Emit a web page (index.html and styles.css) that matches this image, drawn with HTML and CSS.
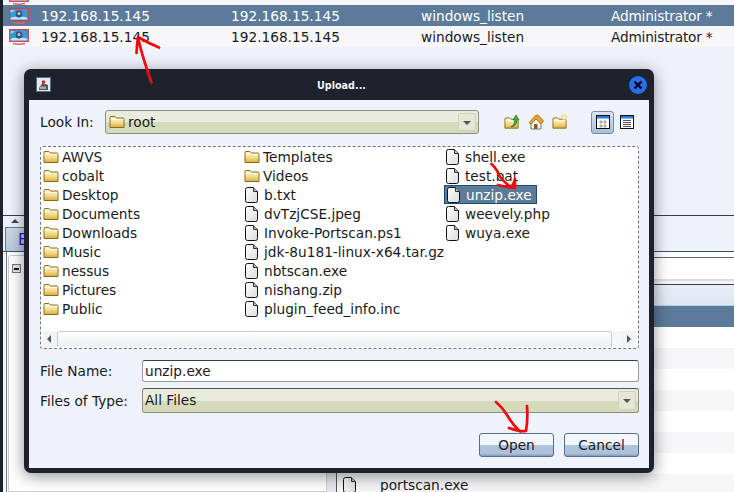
FILE: index.html
```html
<!DOCTYPE html>
<html>
<head>
    <meta charset="utf-8" />
    <title>Upload...</title>
    <link rel="stylesheet" href="styles.css">
</head>
<body>
<svg class="defs" width="0" height="0">
    <defs>
        <linearGradient id="gold" x1="0" y1="0" x2="0" y2="1">
            <stop offset="0" stop-color="#fdf6d0" />
            <stop offset="0.55" stop-color="#f3dc8e" />
            <stop offset="1" stop-color="#d9ac3e" />
        </linearGradient>
        <linearGradient id="sheet" x1="0" y1="0" x2="1" y2="1">
            <stop offset="0" stop-color="#ffffff" />
            <stop offset="1" stop-color="#dcdcdc" />
        </linearGradient>
        <symbol id="folder" viewBox="0 0 16 14">
            <path d="M1 2.5 Q1 1.5 2 1.5 H6 L7.5 3 H14 Q15 3 15 4 V12.5 H1 Z" fill="url(#gold)" stroke="#8a6d1c" />
            <path d="M1.5 4.5 H14.5" stroke="#fffbe6" />
        </symbol>
        <symbol id="doc" viewBox="0 0 13 16">
            <path d="M2.5 .5 H8.5 L12.5 4.5 V13.5 Q12.5 15.5 10.5 15.5 H2.5 Q.5 15.5 .5 13.5 V2.5 Q.5 .5 2.5 .5 Z" fill="url(#sheet)" stroke="#111" />
            <path d="M8.5 .5 V4.5 H12.5" fill="#bbb" stroke="#333" />
        </symbol>
        <symbol id="host" viewBox="0 0 20 16">
            <rect x=".7" y=".7" width="18.6" height="11.6" fill="#2f9bdc" stroke="#d93c4a" stroke-width="1.3" />
            <path d="M1.4 10 Q6 8 10 9.5 Q14 8 18.6 10 V11.6 H1.4 Z" fill="#bfe6f8" />
            <path d="M1.4 2 H6 Q4 4.5 1.4 4.5 Z" fill="#8fd0f0" />
            <circle cx="10" cy="6" r="3.4" fill="#2f4f96" />
            <circle cx="10" cy="5.6" r="1.5" fill="#e9cf55" />
            <path d="M4 14.4 Q10 16 16 14.4" fill="none" stroke="#e2606c" stroke-width="1.6" />
        </symbol>
    </defs>
</svg>

<div class="app">
    <div class="hosts">
        <div class="host-row stub"><svg class="host-icon"><use href="#host" /></svg></div>
        <div class="host-row selected">
            <svg class="host-icon"><use href="#host" /></svg>
            <span>192.168.15.145</span><span>192.168.15.145</span><span>windows_listen</span><span>Administrator *</span>
        </div>
        <div class="host-row">
            <svg class="host-icon"><use href="#host" /></svg>
            <span>192.168.15.145</span><span>192.168.15.145</span><span>windows_listen</span><span>Administrator *</span>
        </div>
    </div>
    <div class="gap"></div>
    <div class="tabstrip">
        <div class="tab-arrow"></div>
        <div class="tab-row"><div class="tab">E</div></div>
    </div>
    <div class="tabpanel">
        <div class="tree"><span class="minus"></span></div>
        <div class="splitter"></div>
        <div class="files">
            <div class="pathbar"></div>
            <div class="thead"></div>
            <div class="file-row selected"></div>
            <div class="file-row"></div>
            <div class="file-row alt"></div>
            <div class="file-row"></div>
            <div class="file-row alt"></div>
            <div class="file-row"></div>
            <div class="file-row alt"></div>
            <div class="file-row"></div>
            <div class="file-row alt">
                <svg class="doc"><use href="#doc" /></svg>
                <span>portscan.exe</span>
            </div>
        </div>
    </div>
</div>

<div class="dialog">
    <div class="titlebar">
        <svg class="app-icon" viewBox="0 0 15 15">
            <rect x=".5" y=".5" width="14" height="14" fill="#e4eaf0" stroke="#50708c" />
            <path d="M3 11 L6.5 6 L12 8 V13 H3 Z" fill="#555" />
            <path d="M3.5 9.5 H10 V12 H3.5 Z" fill="#aaa" />
            <circle cx="7.5" cy="5" r="1.8" fill="#e0202a" />
        </svg>
        <div class="title">Upload...</div>
        <div class="close">
            <svg viewBox="0 0 10 10" width="10" height="10"><path d="M1.5 1.5 L8.5 8.5 M8.5 1.5 L1.5 8.5" stroke="#0a0a14" stroke-width="2.4" /></svg>
        </div>
    </div>
    <div class="dialog-body">
        <div class="lookin">
            <label class="field-label">Look In:</label>
            <div class="combo look-combo">
                <svg class="folder"><use href="#folder" /></svg>
                <span>root</span>
                <div class="combo-arrow"></div>
            </div>
            <div class="tools">
                <svg class="tool" viewBox="0 0 16 16">
                    <use href="#folder" width="15" height="14" y="2" />
                    <path d="M7 13 Q11 11 11 6 H9 L12 1 L15 6 H13 Q13 12 7 13 Z" fill="#3fae3a" stroke="#1c6e1c" stroke-width=".7" />
                </svg>
                <svg class="tool" viewBox="0 0 16 16">
                    <path d="M3 8 V15 H13 V8 L8 4 Z" fill="#f4f4f0" stroke="#777" />
                    <path d="M1 9 L7 2 Q9 0 11 2 L15.5 7 L13 10 L8 5 L3 10 Z" fill="#e8a42c" stroke="#9a6a10" stroke-width=".8" />
                    <rect x="6" y="10" width="3.5" height="5" fill="#8a5a20" />
                </svg>
                <svg class="tool" viewBox="0 0 16 16">
                    <use href="#folder" width="15" height="14" y="2" />
                    <circle cx="12" cy="3.5" r="2.4" fill="#fff6c0" stroke="#d8b040" stroke-width=".7" />
                </svg>
                <div class="view-toggle on">
                    <svg viewBox="0 0 14 14" width="14" height="14">
                        <rect x=".5" y=".5" width="13" height="13" fill="#fff" stroke="#111" />
                        <rect x="1" y="1" width="12" height="2.5" fill="#2a7de0" />
                        <path d="M4 6 h2 v2 h-2 z M8 6 h2 v2 h-2 z M4 10 h2 v2 h-2 z M8 10 h2 v2 h-2 z" fill="none" stroke="#777" stroke-width=".7" />
                    </svg>
                </div>
                <div class="view-toggle">
                    <svg viewBox="0 0 14 14" width="14" height="14">
                        <rect x=".5" y=".5" width="13" height="13" fill="#fff" stroke="#111" />
                        <rect x="1" y="1" width="12" height="2.5" fill="#2a7de0" />
                        <path d="M3 5.5 H11 M3 7.5 H11 M3 9.5 H11 M3 11.5 H11" stroke="#555" />
                    </svg>
                </div>
            </div>
        </div>

        <div class="filelist">
            <div class="columns">
                <ul class="column">
                    <li><svg class="folder"><use href="#folder" /></svg>AWVS</li>
                    <li><svg class="folder"><use href="#folder" /></svg>cobalt</li>
                    <li><svg class="folder"><use href="#folder" /></svg>Desktop</li>
                    <li><svg class="folder"><use href="#folder" /></svg>Documents</li>
                    <li><svg class="folder"><use href="#folder" /></svg>Downloads</li>
                    <li><svg class="folder"><use href="#folder" /></svg>Music</li>
                    <li><svg class="folder"><use href="#folder" /></svg>nessus</li>
                    <li><svg class="folder"><use href="#folder" /></svg>Pictures</li>
                    <li><svg class="folder"><use href="#folder" /></svg>Public</li>
                </ul>
                <ul class="column">
                    <li><svg class="folder"><use href="#folder" /></svg>Templates</li>
                    <li><svg class="folder"><use href="#folder" /></svg>Videos</li>
                    <li><svg class="doc"><use href="#doc" /></svg>b.txt</li>
                    <li><svg class="doc"><use href="#doc" /></svg>dvTzjCSE.jpeg</li>
                    <li><svg class="doc"><use href="#doc" /></svg>Invoke-Portscan.ps1</li>
                    <li><svg class="doc"><use href="#doc" /></svg>jdk-8u181-linux-x64.tar.gz</li>
                    <li><svg class="doc"><use href="#doc" /></svg>nbtscan.exe</li>
                    <li><svg class="doc"><use href="#doc" /></svg>nishang.zip</li>
                    <li><svg class="doc"><use href="#doc" /></svg>plugin_feed_info.inc</li>
                </ul>
                <ul class="column">
                    <li><svg class="doc"><use href="#doc" /></svg>shell.exe</li>
                    <li><svg class="doc"><use href="#doc" /></svg>test.bat</li>
                    <li class="picked"><svg class="doc"><use href="#doc" /></svg><span>unzip.exe</span></li>
                    <li><svg class="doc"><use href="#doc" /></svg>weevely.php</li>
                    <li><svg class="doc"><use href="#doc" /></svg>wuya.exe</li>
                </ul>
            </div>
            <div class="hscroll">
                <div class="scroll-btn left"></div>
                <div class="scroll-track"></div>
                <div class="scroll-btn right"></div>
            </div>
        </div>

        <div class="form-row name-row">
            <label class="field-label wide">File Name:</label>
            <div class="text-field">unzip.exe</div>
        </div>
        <div class="form-row type-row">
            <label class="field-label wide">Files of Type:</label>
            <div class="combo type-combo">
                <span>All Files</span>
                <div class="combo-arrow"></div>
            </div>
        </div>
        <div class="actions">
            <button class="btn">Open</button>
            <button class="btn">Cancel</button>
        </div>
    </div>
</div>

<svg class="scribble" width="734" height="492" viewBox="0 0 734 492">
    <g fill="none" stroke="#f00a0a" stroke-width="2.7" stroke-linecap="round" stroke-linejoin="round">
        <path d="M151.5 82.5 Q147 70 144 60 Q140 47 138 37 Q137 45 136.5 53 M138 37 Q148 43 159 47.5" />
        <path d="M491.5 164 Q497 169 500 177 Q505 183 511 187 Q514 184 515 179 M515 179 V188 Q506 187 498 185" />
        <path d="M496 402 Q502 407 507 415 Q513 425 520 431.5 M527 406 Q528 420 526 431 Q520 432 509 428" />
    </g>
</svg>
</body>
</html>
```

FILE: styles.css
```css
* {
    box-sizing: border-box;
}
html, body {
    margin: 0;
    height: 100%;
}
body {
    width: 734px;
    height: 492px;
    overflow: hidden;
    position: relative;
    font-family: "DejaVu Sans", sans-serif;
    font-size: 13.7px;
    color: #1a1a1a;
    background: #eff2fb;
}
.defs {
    position: absolute;
}

/* window behind the dialog */
.app {
    display: flex;
    flex-direction: column;
    height: 492px;
    border-left: 3px solid #1e222d;
}
.hosts {
    flex: none;
}
.host-row {
    height: 21px;
    display: flex;
    align-items: center;
    padding-left: 6px;
    background: #f7f7fa;
}
.host-row span {
    width: 190px;
}
.host-row span:last-child {
    width: auto;
    letter-spacing: -.2px;
}
.host-row.selected {
    background: #5c7a99;
    color: #fff;
}
.host-row.stub {
    height: 5px;
    overflow: hidden;
    align-items: flex-end;
}
.host-icon {
    width: 20px;
    height: 16px;
    margin-right: 12px;
    flex: none;
}
.gap {
    height: 169px;
    flex: none;
    border-bottom: 1px solid #3a3d45;
}
.tabstrip {
    flex: none;
    height: 36px;
    display: flex;
    flex-direction: column;
    background: #eff2fb;
    border-bottom: 1px solid #2f5576;
}
.tab-arrow {
    height: 11px;
    position: relative;
}
.tab-arrow::after {
    content: "";
    position: absolute;
    left: 8px;
    top: 3px;
    border: 4px solid transparent;
    border-top: 0;
    border-bottom: 4px solid #444;
}
.tab-row {
    flex: 1;
    padding-left: 2px;
}
.tab {
    height: 100%;
    width: 120px;
    border: 1px solid #5c7a99;
    border-bottom: 0;
    background: linear-gradient(#cdd9e6, #b5c7da);
    color: #1414e6;
    font-size: 15px;
    padding: 3px 0 0 12px;
}
.tabpanel {
    flex: 1;
    display: flex;
    min-height: 0;
    background: #fff;
    border-left: 1px solid #fff;
    margin-left: 2px;
    padding-left: 2px;
    box-shadow: inset 1px 0 0 #5c7a99;
}
.tree {
    width: 319px;
    margin-top: 3px;
    border: 1px solid #ccc;
    border-radius: 3px 0 0 0;
    padding: 8px 0 0 3px;
    flex: none;
}
.minus {
    display: block;
    width: 9px;
    height: 9px;
    border: 1px solid #777;
    background: linear-gradient(90deg, transparent 15%, #111 15%, #111 85%, transparent 85%) center / 100% 2px no-repeat, #e8e8e8;
}
.splitter {
    width: 10px;
    flex: none;
    background: #e6e9f2;
    border-right: 1px solid #555;
}
.files {
    flex: 1;
    display: flex;
    flex-direction: column;
    min-width: 0;
}
.pathbar {
    height: 28px;
    flex: none;
    background: linear-gradient(#fff 0 21px, #ddd 21px 23px, #f4f4f4 23px);
    border-top: 1px solid #666;
    margin-top: 5px;
    border-bottom: 1px solid #3a3d45;
}
.thead {
    height: 21px;
    flex: none;
    background: linear-gradient(#e8edf6, #dde6f2);
    border-bottom: 1px solid #b9cde4;
}
.file-row {
    height: 21px;
    flex: none;
    background: #fff;
    display: flex;
    align-items: center;
    padding-left: 6px;
}
.file-row.alt {
    background: #f6f6f9;
}
.file-row.selected {
    background: #5c7a99;
}
.file-row .doc {
    margin-right: 24px;
}

/* Upload dialog */
.dialog {
    position: absolute;
    left: 24px;
    top: 69px;
    width: 630px;
    height: 404px;
    background: #1e222d;
    border-radius: 7px;
    padding: 0 5px 5px;
    display: flex;
    flex-direction: column;
    box-shadow: 0 3px 16px rgba(0, 0, 0, .45);
}
.titlebar {
    height: 31px;
    flex: none;
    display: flex;
    align-items: center;
    position: relative;
    padding: 0 2px 0 7px;
}
.app-icon {
    width: 15px;
    height: 15px;
}
.title {
    flex: 1;
    text-align: center;
    color: #f2f4f8;
    font-family: "DejaVu Sans Condensed", "DejaVu Sans", sans-serif;
    font-weight: bold;
    font-size: 10.7px;
    padding: 1px 0 0 3px;
}
.close {
    width: 18px;
    height: 18px;
    border-radius: 50%;
    background: #2a6de8;
    display: flex;
    align-items: center;
    justify-content: center;
}
.dialog-body {
    flex: 1;
    background: #eff2fb;
    padding: 10px 10px 0 11px;
    display: flex;
    flex-direction: column;
}
.lookin {
    display: flex;
    align-items: center;
    height: 24px;
}
.field-label {
    display: block;
    width: 65px;
    flex: none;
}
.field-label.wide {
    width: 102px;
}
.combo {
    height: 100%;
    display: flex;
    align-items: center;
    border: 1px solid #8d8f78;
    border-radius: 3px;
    background: linear-gradient(#e9ebdc 50%, #d6dabd 50%);
    position: relative;
}
.look-combo {
    width: 374px;
    flex: none;
    padding-left: 3px;
}
.look-combo .folder {
    margin-right: 3px;
}
.combo-arrow {
    position: absolute;
    right: 2px;
    top: 2px;
    bottom: 2px;
    width: 18px;
    border-radius: 2px;
    background: #e4e6d6;
    box-shadow: inset 0 0 0 1px #d0d2bd;
}
.combo-arrow::after {
    content: "";
    position: absolute;
    left: 5px;
    top: 8px;
    border: 4px solid transparent;
    border-bottom: 0;
    border-top: 4px solid #555;
}
.tools {
    display: flex;
    align-items: center;
    margin-left: 25px;
}
.tool {
    width: 16px;
    height: 16px;
    margin-right: 8px;
}
.tool:nth-child(3) {
    margin-right: 23px;
}
.view-toggle {
    width: 23px;
    height: 23px;
    border-radius: 3px;
    display: flex;
    align-items: center;
    justify-content: center;
    margin-right: 1px;
}
.view-toggle.on {
    border: 1px solid #6f8eae;
    background: linear-gradient(#dbe4ef, #a9bfd6);
}
.folder {
    width: 16px;
    height: 14px;
    flex: none;
}
.doc {
    width: 13px;
    height: 16px;
    flex: none;
}

/* file chooser list */
.filelist {
    height: 203px;
    margin-top: 12px;
    flex: none;
    background: #fff;
    border: 1px dashed #6c7380;
    border-radius: 3px;
    display: flex;
    flex-direction: column;
}
.columns {
    flex: 1;
    display: flex;
    padding-left: 2px;
}
.column {
    list-style: none;
    margin: 0;
    padding: 0;
    width: 201px;
    flex: none;
}
.column li {
    height: 19px;
    display: flex;
    align-items: center;
    gap: 3px;
    white-space: nowrap;
}
.column li .doc {
    margin: 0 3px 0 1px;
}
.column li.picked {
    width: 93px;
    margin-left: -1px;
    padding-left: 1px;
    background: #5c7a99;
    outline: 1px solid #1b4a72;
    outline-offset: -1px;
    color: #fff;
}
.column li.picked .doc {
    margin-left: 2px;
}
.hscroll {
    height: 16px;
    margin: 0 2px 1px;
    flex: none;
    display: flex;
    background: #f6f7fa;
}
.scroll-btn {
    width: 14px;
    flex: none;
    position: relative;
    background: #f2f3f6;
}
.scroll-btn::after {
    content: "";
    position: absolute;
    top: 4px;
    left: 4px;
    border: 4px solid transparent;
}
.scroll-btn.left::after {
    border-left: 0;
    border-right: 4px solid #555;
}
.scroll-btn.right::after {
    left: 5px;
    border-right: 0;
    border-left: 4px solid #555;
}
.scroll-track {
    flex: 1;
    border: 1px solid #ccc;
    border-bottom: 0;
    border-radius: 3px 3px 0 0;
    background: linear-gradient(#fff, #eceef2);
    margin-right: 10px;
}

.form-row {
    display: flex;
    align-items: center;
    flex: none;
}
.name-row {
    height: 22px;
    margin-top: 11px;
}
.type-row {
    height: 25px;
    margin-top: 6px;
}
.text-field {
    flex: 1;
    height: 100%;
    background: #fff;
    border: 1px solid #9a9ca2;
    border-top-color: #3a3c42;
    border-radius: 3px;
    padding: 2px 2px 0;
}
.type-combo {
    flex: 1;
    border-top-color: #55564a;
    padding: 0 0 2px 2px;
}
.actions {
    display: flex;
    justify-content: flex-end;
    gap: 10px;
    margin-top: 20px;
}
.btn {
    width: 75px;
    height: 24px;
    padding: 0;
    font: inherit;
    color: #1a1a1a;
    border: 1px solid #4f6f8f;
    border-radius: 3px;
    background: linear-gradient(#f3f6fb 0, #f3f6fb 50%, #aec3db 52%, #aec3db 88%, #7f9cba 100%);
}

.scribble {
    position: absolute;
    left: 0;
    top: 0;
    pointer-events: none;
}
```
